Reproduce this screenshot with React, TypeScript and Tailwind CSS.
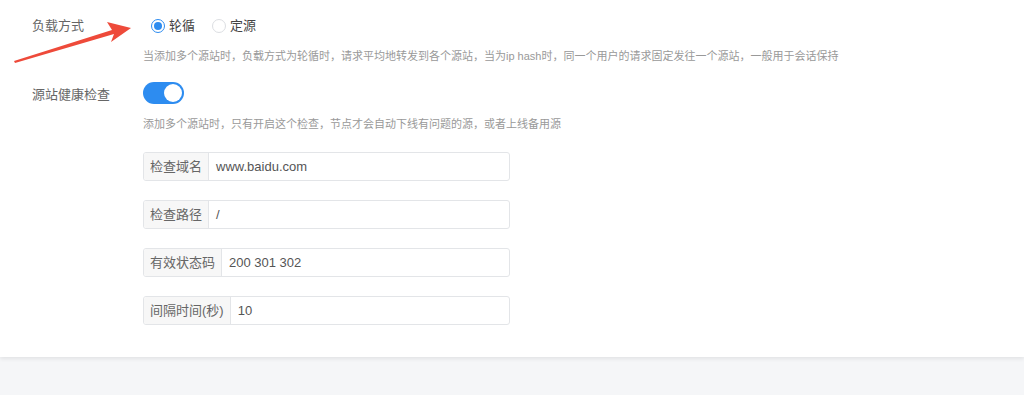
export default function App() {
  const fields = [
    { label: "检查域名", value: "www.baidu.com" },
    { label: "检查路径", value: "/" },
    { label: "有效状态码", value: "200 301 302" },
    { label: "间隔时间(秒)", value: "10" },
  ];

  return (
    <div
      className="relative h-[395px] w-[1024px] overflow-hidden bg-[#f5f6f8]"
      style={{ fontFamily: '"Liberation Sans", Arial, "Noto Sans CJK SC", sans-serif' }}
    >
      <div className="h-[357px] bg-white pl-[32px] pt-[17px] shadow-[0_2px_4px_rgba(0,0,0,0.08)]">
        {/* 负载方式 */}
        <div className="flex">
          <div className="-mt-[1px] w-[111px] text-[13px] text-[#666]">负载方式</div>
          <div>
            <div className="flex h-[18px] items-center pl-[8px] text-[13px] text-[#444]">
              <span className="flex h-[14px] w-[14px] items-center justify-center rounded-full border border-[#2d8cf0]">
                <span className="h-[8px] w-[8px] rounded-full bg-[#2d8cf0]" />
              </span>
              <span className="ml-[4px]">轮循</span>
              <span className="ml-[17px] h-[14px] w-[14px] rounded-full border border-[#dcdee2]" />
              <span className="ml-[4px]">定源</span>
            </div>
            <div className="mt-[13px] text-[11px] text-[#999]">
              当添加多个源站时，负载方式为轮循时，请求平均地转发到各个源站，当为ip hash时，同一个用户的请求固定发往一个源站，一般用于会话保持
            </div>
          </div>
        </div>

        {/* 源站健康检查 */}
        <div className="mt-[17px] flex">
          <div className="w-[111px] pt-[3px] text-[13px] text-[#666]">源站健康检查</div>
          <div>
            <div className="flex h-[22px] w-[41px] items-center justify-end rounded-full bg-[#2d8cf0] pr-[2px]">
              <span className="h-[18px] w-[18px] rounded-full bg-white" />
            </div>
            <div className="mt-[12px] text-[11px] text-[#999]">
              添加多个源站时，只有开启这个检查，节点才会自动下线有问题的源，或者上线备用源
            </div>
            <div className="mt-[20px] flex flex-col gap-[19px]">
              {fields.map((f) => (
                <div
                  key={f.label}
                  className="flex h-[29px] w-[367px] overflow-hidden rounded-[3px] border border-[#e3e5e8] text-[13px]"
                >
                  <div className="flex items-center border-r border-[#e3e5e8] bg-[#f7f7f7] px-[6px] text-[#666]">
                    {f.label}
                  </div>
                  <div className="flex items-center pl-[7px] text-[#555]">{f.value}</div>
                </div>
              ))}
            </div>
          </div>
        </div>
      </div>

      {/* red pointer arrow */}
      <svg className="absolute left-0 top-0" width="160" height="80" viewBox="0 0 160 80">
        <polygon points="15,63 114,34 111,42 131,28 107,22 112,30 14,61" fill="#ee4a3a" />
      </svg>
    </div>
  );
}
